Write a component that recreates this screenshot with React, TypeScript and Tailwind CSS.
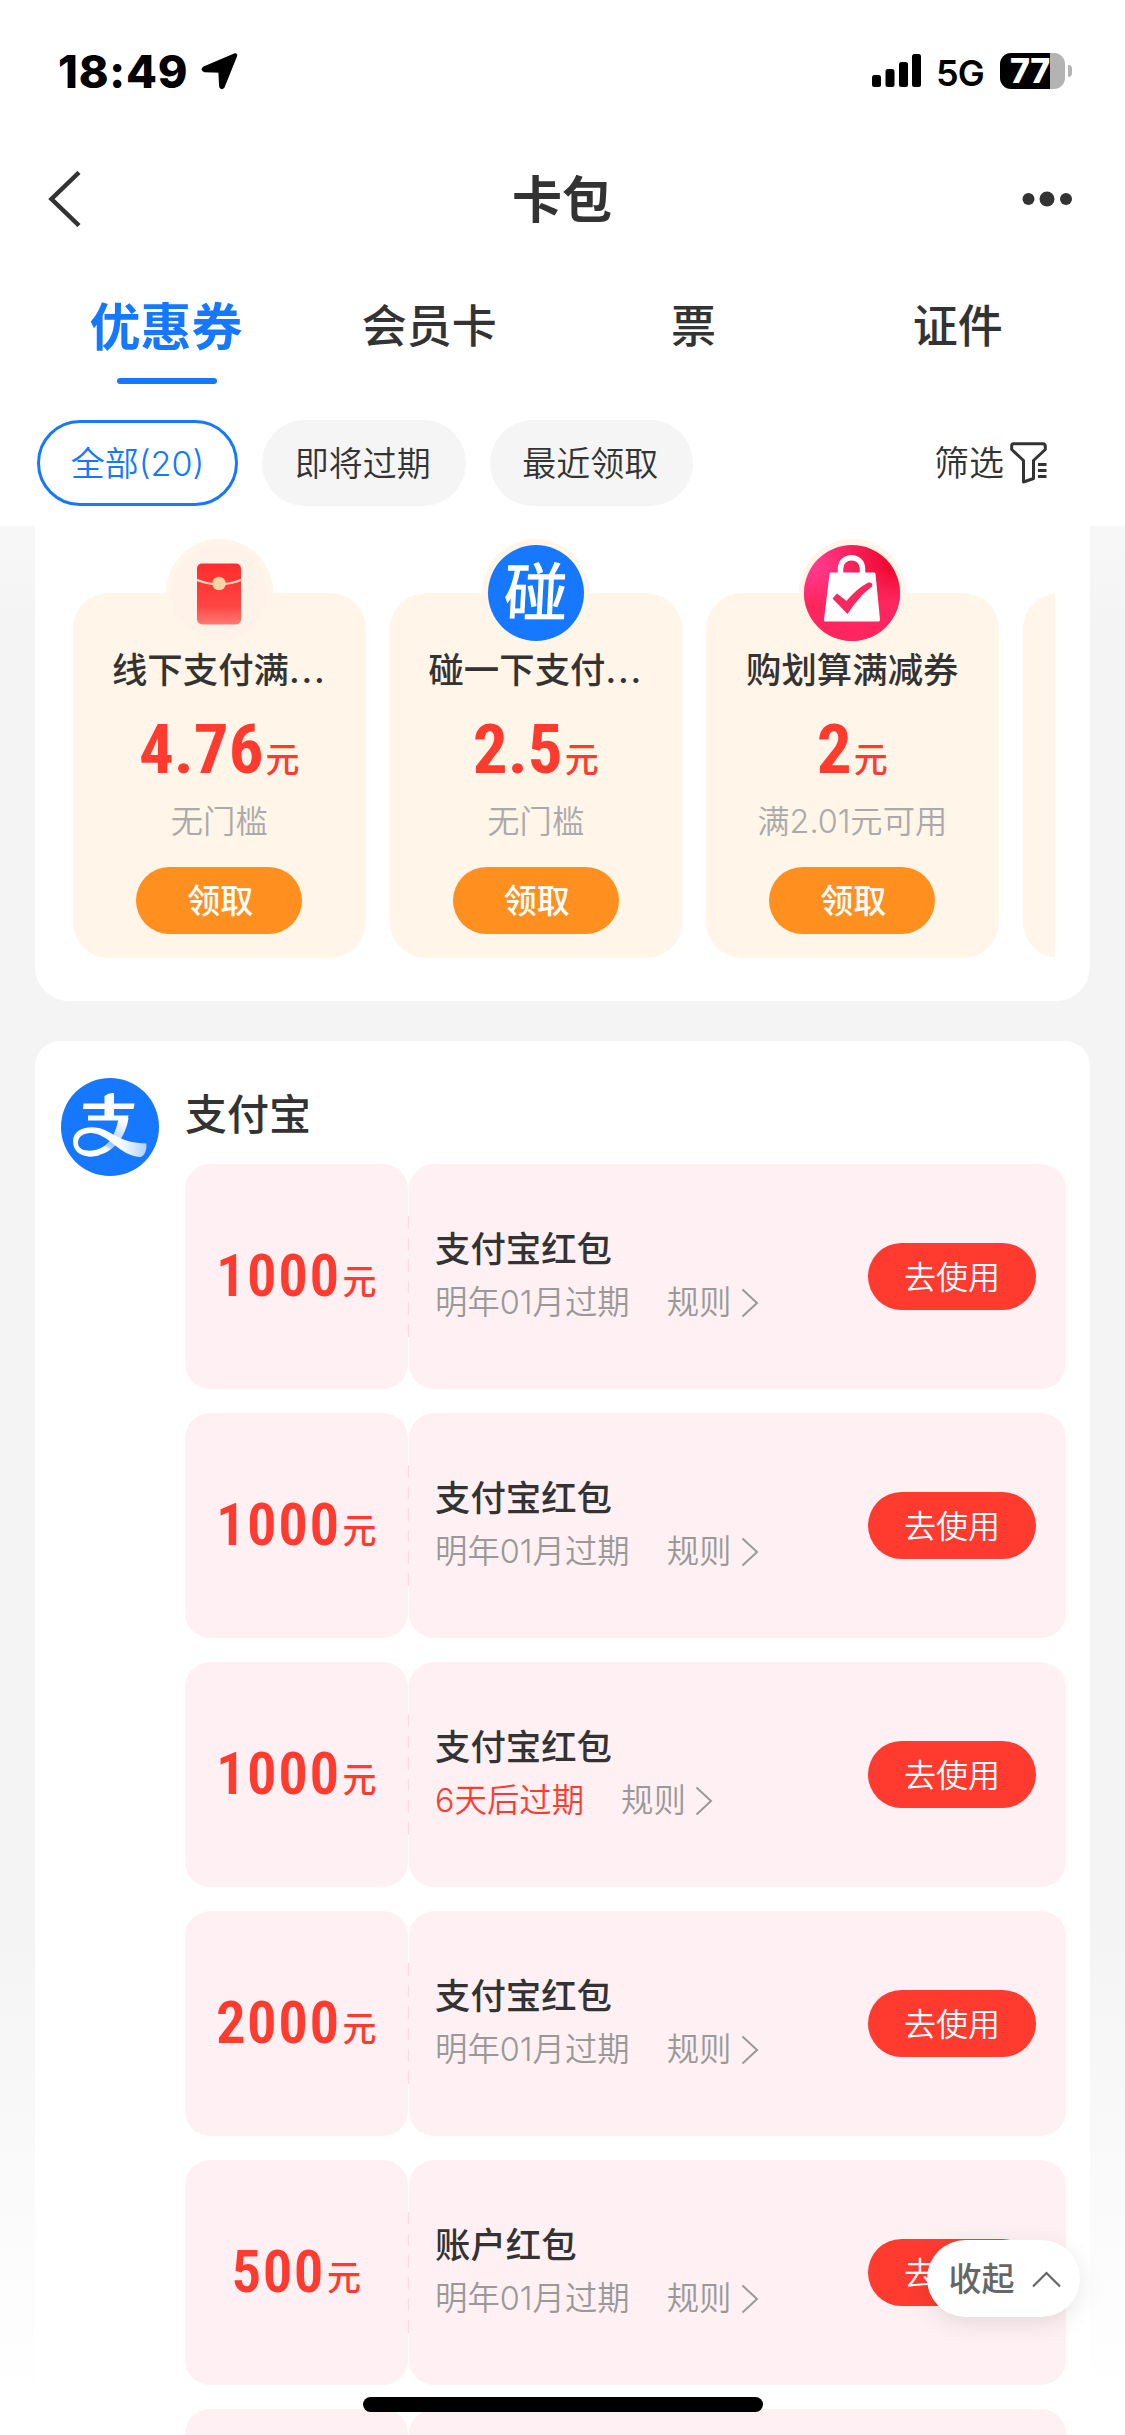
import clsx from "clsx"

const tabs = ["优惠券", "会员卡", "票", "证件"]
const filters = ["全部(20)", "即将过期", "最近领取"]

const offers = [
  { icon: "packet", title: "线下支付满", truncated: true, amount: "4.76", rule: "无门槛" },
  { icon: "tap", title: "碰一下支付", truncated: true, amount: "2.5", rule: "无门槛" },
  { icon: "bag", title: "购划算满减券", truncated: false, amount: "2", rule: "满2.01元可用" },
]

const coupons = [
  { amount: "1000", title: "支付宝红包", expire: "明年01月过期", soon: false },
  { amount: "1000", title: "支付宝红包", expire: "明年01月过期", soon: false },
  { amount: "1000", title: "支付宝红包", expire: "6天后过期", soon: true },
  { amount: "2000", title: "支付宝红包", expire: "明年01月过期", soon: false },
  { amount: "500", title: "账户红包", expire: "明年01月过期", soon: false },
]

const StatusBar = () => {
  return (
    <div className="flex h-[142px] shrink-0 items-center justify-between pl-[58px] pr-[53px] text-black">
      <div className="flex items-center">
        <span className="w-[143px] pt-[1px] text-[45px] font-extrabold leading-none tracking-[0.8px]">18:49</span>
        <svg className="h-[38px] w-[38px]" viewBox="0 0 38 38">
          <path d="M34 3.500 21.500 34.500Q20.500 35.500 20.300 33.500L19.500 18.500L4 18Q2 17.500 3.500 16.500Z" fill="black" stroke="black" strokeWidth="4.500" strokeLinejoin="round" />
        </svg>
      </div>
      <div className="flex items-center">
        <svg className="mr-[15px] h-[34px] w-[49px]" viewBox="0 0 49 34">
          <rect x="0" y="21" width="9" height="12" rx="2.5" />
          <rect x="13.5" y="15" width="9" height="18" rx="2.5" />
          <rect x="27" y="8" width="9" height="25" rx="2.5" />
          <rect x="40" y="0" width="9" height="33" rx="2.5" />
        </svg>
        <span className="w-[64px] pt-[3px] text-[36px] font-semibold leading-[38px] tracking-[-1px]">5G</span>
        <div className="flex h-[36px] w-[65px] items-center rounded-[11px] bg-[linear-gradient(to_right,black_77%,#b3b3b3_77%)] pl-[10px]">
          <span className="text-[34px] font-extrabold leading-[36px] tracking-[-0.5px] text-white">77</span>
        </div>
        <div className="ml-[3px] h-[12px] w-[4px] rounded-r-full bg-[#b3b3b3]" />
      </div>
    </div>
  )
}

const NavBar = () => {
  return (
    <div className="flex h-[114px] shrink-0 items-center justify-between pl-[47px] pr-[53px]">
      <svg className="h-[56px] w-[50px]" viewBox="0 0 50 56" fill="none" stroke="#333" strokeWidth="4.5">
        <path d="M32 1.5 4.5 28 32 54.5" />
      </svg>
      <h1 className="pl-[5px] pt-[2px] text-[50px] font-bold leading-[60px]">卡包</h1>
      <svg className="h-[16px] w-[50px]" viewBox="0 0 50 16" fill="#333">
        <circle cx="6.5" cy="8" r="6" />
        <circle cx="25" cy="8" r="7.5" />
        <circle cx="44" cy="8" r="6" />
      </svg>
    </div>
  )
}

const FilterBar = () => {
  return (
    <div className="flex h-[128px] shrink-0 items-start gap-[24px] pl-[37px] pr-[78px] pt-[22px]">
      {filters.map((name, i) => (
        <button
          key={name}
          className={clsx(
            "h-[86px] rounded-full text-[34px] font-[350]",
            i === 0 ? "w-[201px] border-[3px] border-[#1677ff] text-[#1677ff]" : "w-[203.500px] bg-[#f5f5f5] pr-[2px]"
          )}
        >
          {name}
        </button>
      ))}
      <div className="ml-auto flex h-[86px] items-center gap-[6px]">
        <span className="text-[35px] font-[350]">筛选</span>
        <svg className="h-[42px] w-[37px]" viewBox="0 0 37 42" fill="none" stroke="#333" strokeWidth="3" strokeLinejoin="round">
          <path d="M3.500 1.800H33Q35.500 2 35.300 5V7.500L23.500 18.500V36.500L13.500 40V18.500L1.700 7.500V4Q1.700 1.800 3.500 1.800Z" />
          <path d="M28 22.500H36.500M28 28.500H36.500M28 34.500H36.500" />
        </svg>
      </div>
    </div>
  )
}

const OfferIcon = ({ icon }: { icon: string }) => {
  if (icon === "packet") {
    return (
      <svg className="h-[96px] w-[96px]" viewBox="0 0 96 96">
        <defs>
          <linearGradient id="packet" x1="0" y1="0" x2="0" y2="1">
            <stop offset="0" stopColor="#ff2d2d" />
            <stop offset="0.7" stopColor="#ff4542" />
            <stop offset="1" stopColor="#ff7a73" />
          </linearGradient>
        </defs>
        <circle cx="48" cy="48" r="48" fill="#fff3e9" />
        <rect x="26" y="18.500" width="44" height="61" rx="5" fill="url(#packet)" />
        <path d="M26 35Q48 43.500 70 35" fill="none" stroke="#ffd6b8" strokeWidth="2" />
        <circle cx="48" cy="38.500" r="6.800" fill="#fbd3a4" />
      </svg>
    )
  }
  if (icon === "tap") {
    return (
      <div className="flex h-[96px] w-[96px] items-center justify-center rounded-full bg-[#1677ff]">
        <span className="-skew-x-3 text-[64px] font-medium leading-none text-white">碰</span>
      </div>
    )
  }
  return (
    <svg className="h-[96px] w-[96px]" viewBox="0 0 96 96">
      <defs>
        <linearGradient id="bag" x1="0" y1="0.300" x2="1" y2="0.100">
          <stop offset="0.150" stopColor="#ff3a8c" />
          <stop offset="0.850" stopColor="#f00a32" />
        </linearGradient>
        <linearGradient id="bagFade" x1="0" y1="0" x2="0" y2="1">
          <stop offset="0.250" stopColor="#ff265f" stopOpacity="0" />
          <stop offset="0.600" stopColor="#ff265f" />
        </linearGradient>
      </defs>
      <circle cx="48" cy="48" r="48" fill="url(#bag)" />
      <circle cx="48" cy="48" r="48" fill="url(#bagFade)" />
      <path d="M36.500 30V24C36.500 9 58.500 9 58.500 24V30" fill="none" stroke="white" strokeWidth="5.500" />
      <path d="M27 29H70L74.500 75H21.500Z" fill="white" stroke="white" strokeWidth="3" strokeLinejoin="round" />
      <path d="M28.500 53.500 33 48.500 42.500 56C50 47 56 42 64.500 37.500Q69 37 68 41.500C58 49 51 58 43.500 69Z" fill="#f9275f" />
    </svg>
  )
}

const OfferCard = ({ offer }: { offer: (typeof offers)[number] }) => {
  return (
    <div className="flex h-[365px] w-[292.5px] shrink-0 flex-col items-center rounded-[36px] bg-[#fff5e8]">
      <div className="-mt-[54px] flex h-[107px] w-[107px] shrink-0 items-center justify-center rounded-full bg-[#fff5e8]">
        <OfferIcon icon={offer.icon} />
      </div>
      <h3 className="mt-[3px] text-[35.4px] font-medium leading-[44px]">
        {offer.title}
        {offer.truncated && <span className="tracking-[1.8px]">...</span>}
      </h3>
      <div className="mt-[24px] flex h-[66px] items-baseline gap-[2px] leading-[66px] text-[#ff3b30]">
        <span className="font-[Roboto] text-[69px] font-bold [font-stretch:87%]">{offer.amount}</span>
        <span className="relative -top-[1px] text-[34px] font-medium">元</span>
      </div>
      <p className="mt-[19px] text-[32.3px] font-[350] leading-[40px] text-[#aaa]">{offer.rule}</p>
      <button className="mt-[25px] h-[67px] w-[166px] rounded-full bg-[#ff8f1f] pl-[2px] pt-[2px] text-[33px] font-medium text-white">领取</button>
    </div>
  )
}

const AlipayLogo = () => {
  return (
    <svg className="h-[98px] w-[98px] shrink-0" viewBox="0 0 98 98">
      <defs>
        <linearGradient id="tail" x1="22" y1="0" x2="88" y2="0" gradientUnits="userSpaceOnUse">
          <stop offset="0.550" stopColor="white" />
          <stop offset="1" stopColor="#a9cdff" />
        </linearGradient>
        <linearGradient id="leg" x1="64" y1="42" x2="46" y2="72" gradientUnits="userSpaceOnUse">
          <stop offset="0" stopColor="white" />
          <stop offset="0.850" stopColor="#9fc7ff" />
          <stop offset="1" stopColor="white" />
        </linearGradient>
      </defs>
      <circle cx="49" cy="49" r="49" fill="#1677ff" />
      <path d="M57.500 40H67.500C65 57 54 78 27 78.500L22 72C42 76 54 62 57.500 40Z" fill="url(#leg)" />
      <path d="M43.500 18Q48 14.500 53 15V39H43.500Z" fill="white" />
      <path d="M22.500 25.500H73.500L72.500 31H22ZM27 37.500H67.500L66.500 42.500H27Z" fill="white" />
      <path d="M38 77.500C24 81 12 76 12 63C12 52 25 47 38 50C52 54 59 65 85.500 65.500Q86 76 80 79C60 78 53 62 36 56C26 53 17 57 17 65C17 72 27 75 38 72Z" fill="url(#tail)" />
    </svg>
  )
}

const CouponRow = ({ coupon }: { coupon: (typeof coupons)[number] }) => {
  return (
    <div className="flex h-[225px] w-[881px] shrink-0 items-center">
      <div className="flex h-full w-[222.5px] items-center justify-center rounded-[25px] bg-[#fff1f3]">
        <div className="flex items-baseline gap-[2px] pb-[2px] text-[#ff3b30]">
          <span className="font-[Roboto] text-[59px] font-semibold leading-none tracking-[1.5px] [font-stretch:87%]">{coupon.amount}</span>
          <span className="relative -top-[2px] text-[34px] font-medium leading-none">元</span>
        </div>
      </div>
      <div className="h-[121px] w-[1.5px] bg-[repeating-linear-gradient(to_bottom,#ffd9df_0,#ffd9df_12.5px,#fff1f3_12.5px,#fff1f3_21.6px)]" />
      <div className="flex h-full flex-1 items-center justify-between rounded-[25px] bg-[#fff1f3] pl-[26px] pr-[30px]">
        <div>
          <h3 className="text-[35.4px] font-medium leading-[54px]">{coupon.title}</h3>
          <p className="-mt-[1px] flex items-center pb-[1px] text-[32.4px] font-[350] leading-[53px] text-[#999]">
            <span className={clsx(coupon.soon && "text-[#ff3b30]")}>{coupon.expire}</span>
            <span className="ml-[37px]">规则</span>
            <svg className="ml-[9px] h-[30px] w-[18px]" viewBox="0 0 18 30" fill="none" stroke="#999" strokeWidth="2">
              <path d="M1.500 1.500 16 15 1.500 28.500" />
            </svg>
          </p>
        </div>
        <button className="h-[67px] w-[168px] rounded-full bg-[#ff3b30] pt-[3px] text-[32px] font-[350] text-white">去使用</button>
      </div>
    </div>
  )
}

const App = () => {
  return (
    <div className="relative flex h-[2435px] w-[1125px] flex-col overflow-hidden bg-white font-[Inter,'Noto_Sans_CJK_SC',sans-serif] text-[#333]">
      <StatusBar />
      <NavBar />
      <div className="grid h-[142px] shrink-0 grid-cols-4 px-[34px]">
        {tabs.map((tab, i) => (
          <div key={tab} className="flex flex-col items-center">
            <span
              className={clsx(
                "h-[122px]",
                i === 0 ? "text-[51px] font-bold leading-[143px] text-[#1677ff]" : "pr-[2px] text-[45px] font-medium leading-[142px]"
              )}
            >
              {tab}
            </span>
            {i === 0 && <div className="ml-[2px] h-[6px] w-[100px] rounded-full bg-[#1677ff]" />}
          </div>
        ))}
      </div>
      <FilterBar />

      <main className="h-[1909px] shrink-0 overflow-hidden bg-[linear-gradient(to_bottom,#f7f7f7_0,#f4f4f4_100px,#f4f4f4_1400px,#ffffff_1880px)] px-[35px]">
        <section className="h-[475px] rounded-b-[34px] bg-white pl-[38px] pr-[35px]">
          <div className="flex h-full gap-[24px] overflow-hidden pt-[67px]">
            {offers.map((offer) => (
              <OfferCard key={offer.title} offer={offer} />
            ))}
            <div className="h-[365px] w-[292.5px] shrink-0 rounded-[36px] bg-[#fff5e8]" />
          </div>
        </section>

        <section className="mt-[40px] flex h-[1600px] items-start gap-[26px] rounded-t-[25px] bg-white pl-[26px] pt-[37px]">
          <AlipayLogo />
          <div>
            <h2 className="h-[86px] text-[42px] font-medium leading-[74px]">支付宝</h2>
            <div className="flex flex-col gap-[24px]">
              {coupons.map((coupon, i) => (
                <CouponRow key={i} coupon={coupon} />
              ))}
              {/* next coupon, its content is still below the fold */}
              <div className="flex h-[225px] w-[881px] gap-[1.5px]">
                <div className="w-[222.5px] rounded-[25px] bg-[#fff1f3]" />
                <div className="flex-1 rounded-[25px] bg-[#fff1f3]" />
              </div>
            </div>
          </div>
        </section>
      </main>

      <button className="absolute bottom-[118px] right-[45px] flex h-[77px] w-[153px] items-center justify-center gap-[17px] rounded-full bg-white pl-[2px] pt-[2px] text-[33px] font-medium text-[#666] shadow-[0_6px_24px_rgba(0,0,0,0.1)]">
        收起
        <svg className="h-[17px] w-[29px]" viewBox="0 0 29 17" fill="none" stroke="#666" strokeWidth="2.2">
          <path d="M1 15.500 14.500 2 28 15.500" />
        </svg>
      </button>
      <div className="absolute bottom-[23px] left-[363px] h-[15px] w-[400px] rounded-full bg-black" />
    </div>
  )
}

export default App
